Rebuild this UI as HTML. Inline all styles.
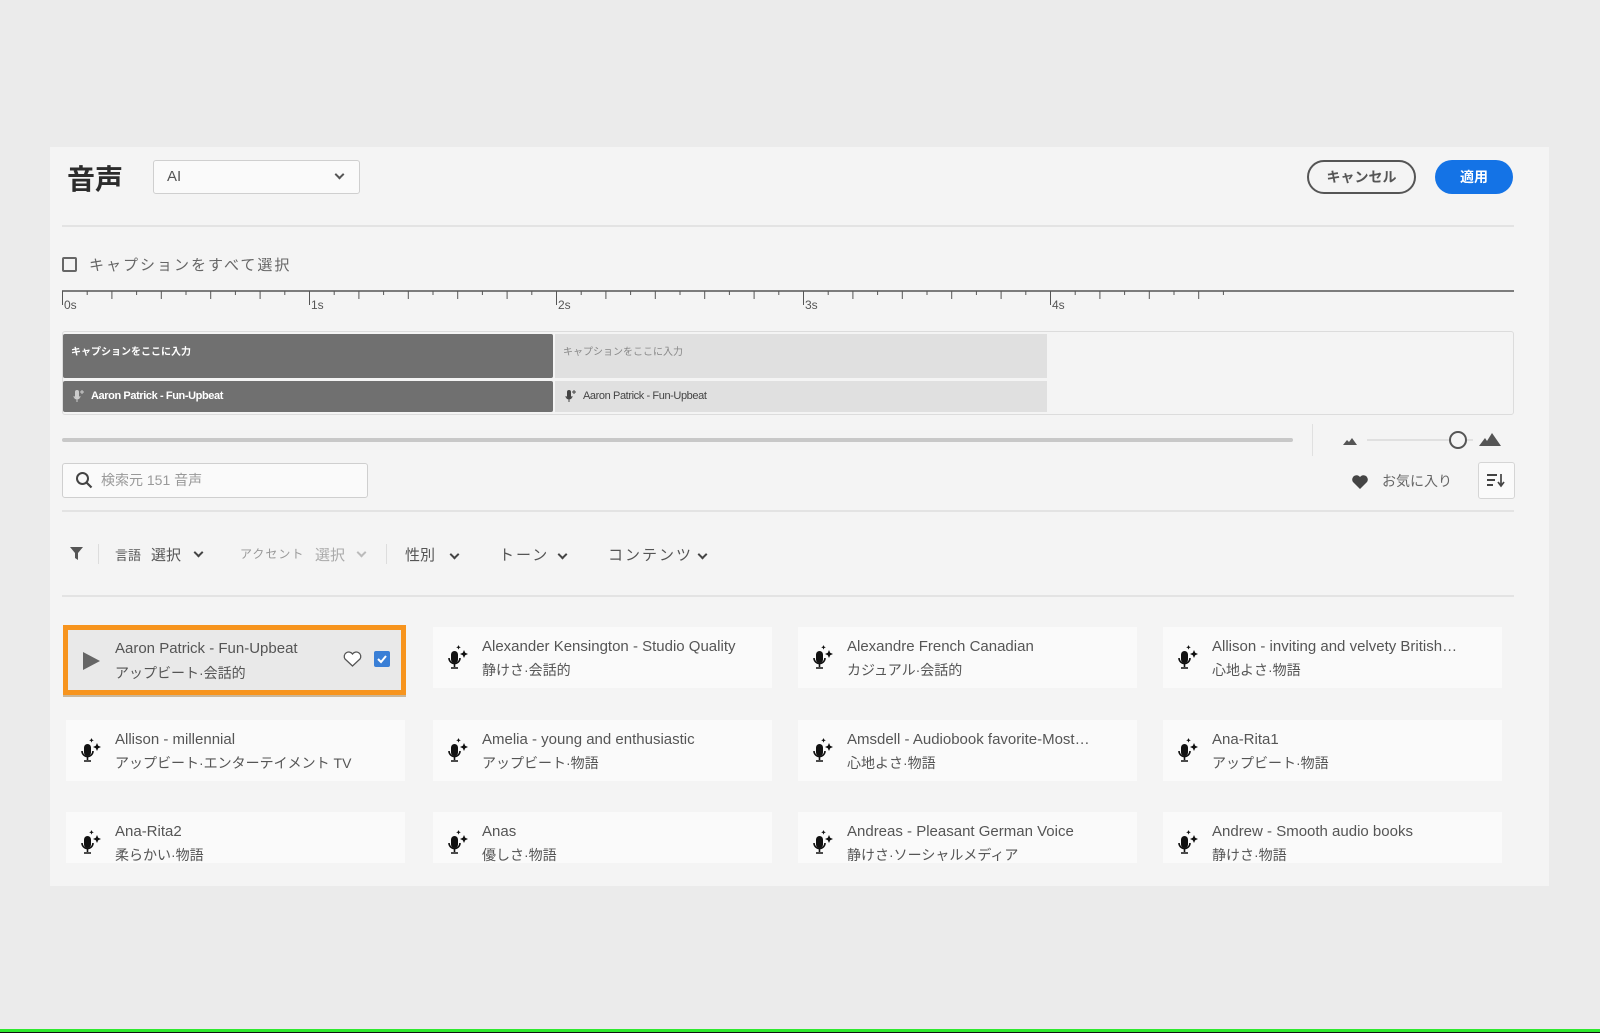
<!DOCTYPE html>
<html><head><meta charset="utf-8"><style>
*{box-sizing:border-box;margin:0;padding:0}
body{width:1600px;height:1033px;background:#ebebeb;position:relative;overflow:hidden;font-family:"Liberation Sans","Noto Sans CJK JP",sans-serif;color:#4b4b4b}
.a{position:absolute}
#panel{left:50px;top:147px;width:1499px;height:739px;background:#f4f4f4}
.hl{position:absolute;height:2px;background:#e3e3e3}
.card{position:absolute;width:339px;height:61px;background:#fafafa;overflow:hidden}
.card .t{position:absolute;left:49px;top:11px;font-size:15px;color:#555;white-space:nowrap}
.card .s{position:absolute;left:49px;top:33px;font-size:14px;color:#555;white-space:nowrap}
.card svg.m{position:absolute;left:15px;top:18px}
.chev{display:inline-block;width:7px;height:7px;border-right:2px solid #444;border-bottom:2px solid #444;transform:rotate(45deg);position:absolute}
</style></head><body>
<div class="a" id="panel"></div>
<div class="a" style="left:67px;top:158px;font-size:28px;font-weight:bold;color:#2c2c2c;font-family:'Noto Sans CJK JP',sans-serif">音声</div>
<div class="a" style="left:153px;top:160px;width:207px;height:34px;border:1px solid #cfcfcf;border-radius:3px;background:#fafafa"></div>
<div class="a" style="left:167px;top:168px;font-size:15px;color:#555">AI</div>
<div class="chev" style="left:336px;top:171px;border-color:#555"></div>
<div class="a" style="left:1307px;top:160px;width:109px;height:34px;border:2px solid #555;border-radius:17px;text-align:center;line-height:30px;font-size:14px;font-weight:bold;color:#555">キャンセル</div>
<div class="a" style="left:1435px;top:160px;width:78px;height:34px;background:#1473e6;border-radius:17px;text-align:center;line-height:34px;font-size:14px;font-weight:bold;color:#fff">適用</div>
<div class="hl" style="left:62px;top:225px;width:1452px"></div>
<div class="a" style="left:62px;top:257px;width:15px;height:15px;border:2px solid #666;border-radius:2px"></div>
<div class="a" style="left:89px;top:254px;font-size:15px;color:#666;letter-spacing:2px">キャプションをすべて選択</div>
<svg class="a" style="left:0;top:285px" width="1600" height="30">
<line x1="62" y1="6" x2="1514" y2="6" stroke="#555" stroke-width="1.5"/>
<g stroke="#555" stroke-width="1">
<line x1="62.5" y1="6" x2="62.5" y2="20"/><line x1="309.5" y1="6" x2="309.5" y2="20"/><line x1="556.5" y1="6" x2="556.5" y2="20"/><line x1="803.5" y1="6" x2="803.5" y2="20"/><line x1="1050.5" y1="6" x2="1050.5" y2="20"/>
</g>
<g stroke="#555" stroke-width="1" id="tk"></g>
<g font-size="12" fill="#555" font-family="Liberation Sans,sans-serif">
<text x="64" y="24">0s</text><text x="311" y="24">1s</text><text x="558" y="24">2s</text><text x="805" y="24">3s</text><text x="1052" y="24">4s</text></g>
</svg>
<div class="a" style="left:62px;top:331px;width:1452px;height:84px;border:1px solid #dcdcdc;border-radius:3px;background:#f4f4f4"></div>
<div class="a" style="left:63px;top:334px;width:490px;height:44px;background:#707070;border-radius:2px"></div>
<div class="a" style="left:63px;top:381px;width:490px;height:31px;background:#707070;border-radius:2px"></div>
<div class="a" style="left:555px;top:334px;width:492px;height:44px;background:#e0e0e0"></div>
<div class="a" style="left:555px;top:381px;width:492px;height:31px;background:#e0e0e0"></div>
<div class="a" style="left:71px;top:343px;font-size:10px;color:#fff;font-weight:bold">キャプションをここに入力</div>
<div class="a" style="left:563px;top:343px;font-size:10px;color:#888">キャプションをここに入力</div>
<div class="a" style="left:91px;top:390px;font-size:11px;color:#fff;font-weight:bold;letter-spacing:-0.4px">Aaron Patrick - Fun-Upbeat</div>
<div class="a" style="left:583px;top:390px;font-size:11px;color:#444;letter-spacing:-0.4px">Aaron Patrick - Fun-Upbeat</div>
<svg class="a" style="left:73px;top:389px" width="12" height="16"><rect x="2" y="1" width="4" height="9" rx="2" fill="#ccc"/><path d="M1 7a3 3 0 0 0 6 0M4 10v3" stroke="#ccc" fill="none"/><path d="M9 1v4M7 3h4" stroke="#ccc"/></svg>
<svg class="a" style="left:565px;top:389px" width="12" height="16"><rect x="2" y="1" width="4" height="9" rx="2" fill="#444"/><path d="M1 7a3 3 0 0 0 6 0M4 10v3" stroke="#444" fill="none"/><path d="M9 1v4M7 3h4" stroke="#444"/></svg>
<div class="a" style="left:62px;top:438px;width:1231px;height:4px;background:#c8c8c8;border-radius:2px"></div>
<div class="a" style="left:1312px;top:424px;width:1px;height:32px;background:#e0e0e0"></div>
<svg class="a" style="left:1340px;top:430px" width="180" height="20">
<path d="M3 15l4-5 2 2 3-4 5 7z" fill="#555"/>
<line x1="27" y1="10" x2="109" y2="10" stroke="#ccc"/>
<circle cx="118" cy="10" r="8" fill="#f4f4f4" stroke="#555" stroke-width="2"/>
<line x1="127" y1="10" x2="133" y2="10" stroke="#ccc"/>
<path d="M139 16l6-8 2 3 5-8 9 13z" fill="#555"/>
</svg>
<div class="a" style="left:62px;top:463px;width:306px;height:35px;border:1px solid #cfcfcf;border-radius:3px;background:#fafafa"></div>
<svg class="a" style="left:75px;top:471px" width="20" height="20"><circle cx="7.5" cy="7.5" r="5.5" stroke="#444" stroke-width="2" fill="none"/><path d="M11.5 11.5l5 5" stroke="#444" stroke-width="2.2"/></svg>
<div class="a" style="left:101px;top:470px;font-size:14px;color:#999">検索元 151 音声</div>
<svg class="a" style="left:1351px;top:473px" width="20" height="18"><path d="M9 16L2 9a4 4 0 0 1 7-5 4 4 0 0 1 7 5z" fill="#444"/></svg>
<div class="a" style="left:1382px;top:471px;font-size:14px;color:#666">お気に入り</div>
<div class="a" style="left:1478px;top:462px;width:37px;height:37px;border:1px solid #d5d5d5;border-radius:3px;background:#fafafa"></div>
<svg class="a" style="left:1486px;top:473px" width="22" height="16"><path d="M1 2h10M1 7h8M1 12h6" stroke="#444" stroke-width="2"/><path d="M15 1v11M12 9l3 4 3-4" stroke="#444" stroke-width="1.7" fill="none"/></svg>
<div class="hl" style="left:62px;top:510px;width:1452px"></div>
<svg class="a" style="left:70px;top:547px" width="14" height="14"><path d="M0 0h13L8 6v7L5 11V6z" fill="#555"/></svg>
<div class="a" style="left:98px;top:544px;width:1px;height:20px;background:#ddd"></div>
<div class="a" style="left:115px;top:545px;font-size:13px;color:#555">言語</div>
<div class="a" style="left:151px;top:544px;font-size:15px;color:#555">選択</div>
<div class="chev" style="left:195px;top:549px"></div>
<div class="a" style="left:240px;top:545px;font-size:12px;color:#999;letter-spacing:1px">アクセント</div>
<div class="a" style="left:315px;top:544px;font-size:15px;color:#aaa">選択</div>
<div class="chev" style="left:358px;top:549px;border-color:#bbb"></div>
<div class="a" style="left:386px;top:544px;width:1px;height:20px;background:#ddd"></div>
<div class="a" style="left:405px;top:544px;font-size:15px;color:#555">性別</div>
<div class="chev" style="left:451px;top:551px"></div>
<div class="a" style="left:499px;top:544px;font-size:15px;color:#555;letter-spacing:2px">トーン</div>
<div class="chev" style="left:559px;top:551px"></div>
<div class="a" style="left:608px;top:544px;font-size:15px;color:#555;letter-spacing:2px">コンテンツ</div>
<div class="chev" style="left:699px;top:551px"></div>
<div class="hl" style="left:62px;top:595px;width:1452px"></div>

<div class="a" style="left:63px;top:625px;width:343px;height:70px;border:5px solid #f7941d;background:#e9e9e9;box-shadow:0 2px 0 #c9b79b"></div>
<svg class="a" style="left:82px;top:651px" width="20" height="20"><path d="M1 1l17 9-17 9z" fill="#666"/></svg>
<div class="a" style="left:115px;top:640px;font-size:15px;color:#555">Aaron Patrick - Fun-Upbeat</div>
<div class="a" style="left:115px;top:663px;font-size:14px;color:#555">アップビート·会話的</div>
<svg class="a" style="left:343px;top:650px" width="20" height="18"><path d="M9.5 16L2 9a4 4 0 0 1 7.5-5 4 4 0 0 1 7.5 5z" fill="#fff" stroke="#555" stroke-width="1.3"/></svg>
<div class="a" style="left:374px;top:651px;width:16px;height:16px;background:#3a7fd6;border-radius:2px"></div>
<svg class="a" style="left:374px;top:651px" width="16" height="16"><path d="M4 8l3 3 5-6" stroke="#fff" stroke-width="2" fill="none"/></svg>

<div id="cards"></div>
<div class="a" style="left:0;top:1029px;width:1600px;height:3px;background:#2ee82e"></div>
<div class="a" style="left:0;top:1032px;width:1600px;height:1px;background:#111"></div>
<script>
var tk=document.getElementById('tk'),s='';
for(var i=1;i<48;i++){if(i%10==0)continue;var x=62.5+i*24.7;s+='<line x1="'+x.toFixed(1)+'" y1="6" x2="'+x.toFixed(1)+'" y2="'+(i%2?10:14)+'"/>';}
tk.innerHTML=s;
var mic='<svg class="m" width="22" height="26"><rect x="3" y="6" width="7" height="12" rx="3.5" fill="#111"/><path d="M1 13a5.5 5.5 0 0 0 11 0M6.5 19v3M3 23h7" stroke="#111" stroke-width="1.6" fill="none"/><path d="M16 5l1.2 2.8 2.8 1.2-2.8 1.2L16 13l-1.2-2.8L12 9l2.8-1.2zM10.5 0l.7 1.6 1.6.7-1.6.7-.7 1.6-.7-1.6-1.6-.7 1.6-.7z" fill="#111"/></svg>';
var d=[[null,null,433,627,"Alexander Kensington - Studio Quality","静けさ·会話的"],[0,0,798,627,"Alexandre French Canadian","カジュアル·会話的"],[0,0,1163,627,"Allison - inviting and velvety British…","心地よさ·物語"],
[0,0,66,720,"Allison - millennial","アップビート·エンターテイメント TV"],[0,0,433,720,"Amelia - young and enthusiastic","アップビート·物語"],[0,0,798,720,"Amsdell - Audiobook favorite-Most…","心地よさ·物語"],[0,0,1163,720,"Ana-Rita1","アップビート·物語"],
[0,0,66,812,"Ana-Rita2","柔らかい·物語"],[0,0,433,812,"Anas","優しさ·物語"],[0,0,798,812,"Andreas - Pleasant German Voice","静けさ·ソーシャルメディア"],[0,0,1163,812,"Andrew - Smooth audio books","静けさ·物語"]];
var h='';d.forEach(function(c){var ht=c[3]==812?51:61;h+='<div class="card" style="left:'+c[2]+'px;top:'+c[3]+'px;height:'+ht+'px">'+mic+'<div class="t">'+c[4]+'</div><div class="s">'+c[5]+'</div></div>';});
document.getElementById('cards').innerHTML=h;
</script>
</body></html>
